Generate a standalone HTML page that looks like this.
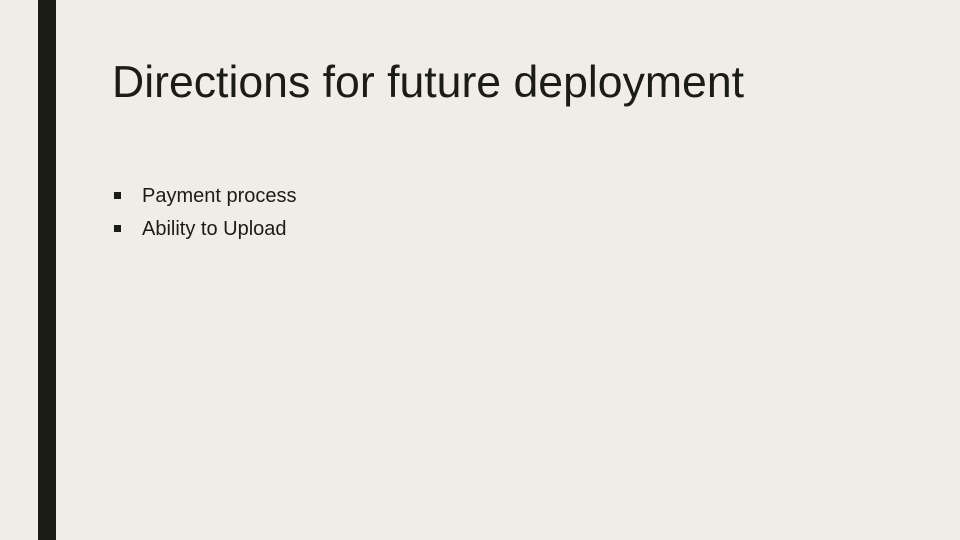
<!DOCTYPE html>
<html><head><style>
html,body{margin:0;padding:0}
body{width:960px;height:540px;background:#efede6;position:relative;overflow:hidden;font-family:"Liberation Sans",sans-serif;color:#1b1c14}
.bar{position:absolute;left:38px;top:0;width:18px;height:540px;background:#1b1c14}
h1{position:absolute;left:112px;top:58px;margin:0;font-weight:normal;font-size:44.6px;letter-spacing:0}
.li{position:absolute;left:142px;font-size:20px}
.b{position:absolute;left:114px;width:7px;height:7px;background:#1b1c14}
</style></head><body>
<div class="bar"></div>
<h1>Directions for future deployment</h1>
<div class="b" style="top:192px"></div><div class="li" style="top:185px">Payment process</div>
<div class="b" style="top:225px"></div><div class="li" style="top:218px">Ability to Upload</div>
</body></html>
